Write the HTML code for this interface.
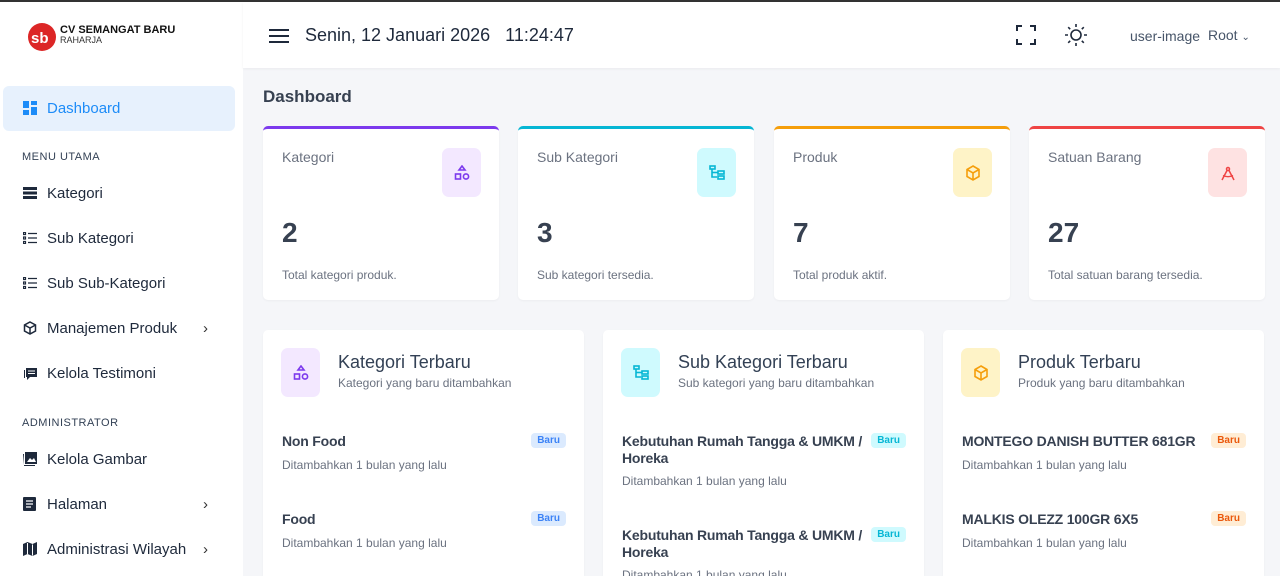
<!DOCTYPE html>
<html style="width:1280px;height:576px;overflow:hidden"><head><meta charset="utf-8"><style>
*{box-sizing:border-box;margin:0;padding:0}
body{width:1280px;height:576px;overflow:hidden;font-family:"Liberation Sans",sans-serif;background:#f5f6f9;position:relative;color:#334155}
.top{position:absolute;left:0;top:0;width:1280px;height:2px;background:#333}
.side{position:absolute;left:0;top:2px;width:243px;height:574px;background:#fff}
.hdr{position:absolute;left:243px;top:2px;width:1037px;height:66px;background:#fff;box-shadow:0 1px 3px rgba(0,0,0,.05)}
.nav{position:absolute;left:0;width:243px;height:20px;display:flex;align-items:center;font-size:15px;color:#1e293b}
.nav svg{position:absolute;left:23px}
.nav span{position:absolute;left:47px}
.nav .ch{left:203px;color:#333}
.sec{position:absolute;left:22px;font-size:11px;color:#334155;letter-spacing:.5px}
.card{position:absolute;background:#fff;border-radius:5px;box-shadow:0 1px 2px rgba(0,0,0,.04)}
.stat{top:126px;width:236px;height:174px;border-top:3px solid}
.stat .l{position:absolute;left:19px;top:20px;font-size:14px;color:#6b7280}
.stat .ic{position:absolute;left:179px;top:19px;width:39px;height:49px;border-radius:7px;display:flex;align-items:center;justify-content:center}
.stat .n{position:absolute;left:19px;top:88px;font-size:28px;font-weight:bold;color:#374151}
.stat .f{position:absolute;left:19px;top:139px;font-size:12px;color:#6b7280}
.big{top:330px;width:321px;height:246px;border-radius:5px 5px 0 0}
.big .ic{position:absolute;left:18px;top:18px;width:39px;height:49px;border-radius:7px;display:flex;align-items:center;justify-content:center}
.big .t{position:absolute;left:75px;top:22px;font-size:18px;color:#334155}
.big .s{position:absolute;left:75px;top:46px;font-size:12px;color:#6b7280}
.it{position:absolute;left:19px;font-size:14px;font-weight:bold;color:#374151;line-height:17px;white-space:nowrap;letter-spacing:-.2px}
.sub{position:absolute;left:19px;font-size:12px;color:#6b7280}
.bd{position:absolute;right:18px;font-size:10px;font-weight:bold;padding:2px 6px;border-radius:4px}
</style></head><body>
<div class="top"></div>
<div class="side">
 <svg style="position:absolute;left:27px;top:20px" width="30" height="30" viewBox="0 0 30 30"><circle cx="15" cy="15" r="14" fill="#dc2626"/><text x="4" y="21" font-size="15" font-weight="bold" fill="#fff" font-family="Liberation Sans">sb</text></svg>
 <div style="position:absolute;left:60px;top:22px;font-size:11px;font-weight:bold;color:#111">CV SEMANGAT BARU</div>
 <div style="position:absolute;left:60px;top:33px;font-size:9px;color:#333">RAHARJA</div>
 <div style="position:absolute;left:3px;top:84px;width:232px;height:45px;background:#e7f1fd;border-radius:6px"></div>
 <div class="nav" style="top:96px;color:#1d8cf8"><svg width="14" height="14" viewBox="0 0 14 14" fill="#1d8cf8"><rect x="0" y="0" width="6" height="7"/><rect x="8" y="0" width="6" height="4"/><rect x="0" y="9" width="6" height="5"/><rect x="8" y="6" width="6" height="8"/></svg><span>Dashboard</span></div>
 <div class="sec" style="top:149px">MENU UTAMA</div>
 <div class="nav" style="top:181px"><svg width="14" height="12" viewBox="0 0 14 12" fill="#1e293b"><rect y="0" width="14" height="3"/><rect y="4.5" width="14" height="3"/><rect y="9" width="14" height="3"/></svg><span>Kategori</span></div>
 <div class="nav" style="top:226px"><svg width="14" height="12" viewBox="0 0 14 12" fill="none" stroke="#1e293b" stroke-width="1.2"><rect x=".5" y=".5" width="2" height="2"/><rect x=".5" y="5" width="2" height="2"/><rect x=".5" y="9.5" width="2" height="2"/><path d="M5 1.5h9M5 6h9M5 10.5h9"/></svg><span>Sub Kategori</span></div>
 <div class="nav" style="top:271px"><svg width="14" height="12" viewBox="0 0 14 12" fill="none" stroke="#1e293b" stroke-width="1.2"><rect x=".5" y=".5" width="2" height="2"/><rect x=".5" y="5" width="2" height="2"/><rect x=".5" y="9.5" width="2" height="2"/><path d="M5 1.5h9M5 6h9M5 10.5h9"/></svg><span>Sub Sub-Kategori</span></div>
 <div class="nav" style="top:316px"><svg width="14" height="14" viewBox="0 0 14 14" fill="none" stroke="#1e293b" stroke-width="1.5"><path d="M7 1l5.5 3v6L7 13 1.5 10V4zM1.5 4L7 7l5.5-3M7 7v6"/></svg><span>Manajemen Produk</span><span class="ch">›</span></div>
 <div class="nav" style="top:361px"><svg width="15" height="15" viewBox="0 0 15 15" fill="#1e293b"><path d="M3 2h11v9H7l-3 3v-3H3z"/><rect x="5" y="4.5" width="7" height="1" fill="#fff"/><rect x="5" y="7" width="7" height="1" fill="#fff"/><path d="M1 4h1v8H1z"/></svg><span>Kelola Testimoni</span></div>
 <div class="sec" style="top:415px">ADMINISTRATOR</div>
 <div class="nav" style="top:447px"><svg width="14" height="14" viewBox="0 0 14 14" fill="#1e293b"><path d="M2 0h12v12H2z"/><path d="M0 2h1v12h11v-1H1z" /><path d="M4 10l3-4 2 2 2-2 2 4z" fill="#fff"/></svg><span>Kelola Gambar</span></div>
 <div class="nav" style="top:492px"><svg width="13" height="14" viewBox="0 0 13 14" fill="#1e293b"><rect width="13" height="14" rx="1"/><path d="M3 4h7M3 7h7M3 10h5" stroke="#fff" stroke-width="1.3"/></svg><span>Halaman</span><span class="ch">›</span></div>
 <div class="nav" style="top:537px"><svg width="14" height="14" viewBox="0 0 14 14" fill="#1e293b"><path d="M0 2l4.5-2 5 2L14 0v12l-4.5 2-5-2L0 14z"/><path d="M4.5 1v11M9.5 2.5v11" stroke="#fff" stroke-width="1"/></svg><span>Administrasi Wilayah</span><span class="ch">›</span></div>
</div>
<div class="hdr">
 <svg style="position:absolute;left:26px;top:27px" width="20" height="14" viewBox="0 0 20 14" stroke="#1e293b" stroke-width="2"><path d="M0 1h20M0 7h20M0 13h20"/></svg>
 <div style="position:absolute;left:62px;top:23px;font-size:18px;color:#1e293b">Senin, 12 Januari 2026&nbsp;&nbsp;&nbsp;11:24:47</div>
 <svg style="position:absolute;left:773px;top:23px" width="20" height="20" viewBox="0 0 20 20" fill="none" stroke="#1e293b" stroke-width="2"><path d="M1 6V1h5M14 1h5v5M19 14v5h-5M6 19H1v-5"/></svg>
 <svg style="position:absolute;left:822px;top:22px" width="22" height="22" viewBox="0 0 22 22" fill="none" stroke="#1e293b" stroke-width="1.6"><circle cx="11" cy="11" r="5"/><path d="M11 0v3M11 19v3M0 11h3M19 11h3M3.2 3.2l2 2M16.8 16.8l2 2M3.2 18.8l2-2M16.8 5.2l2-2"/></svg>
 <div style="position:absolute;left:887px;top:26px;font-size:14px;color:#475569">user-image</div>
 <div style="position:absolute;left:965px;top:25px;font-size:14px;color:#475569">Root <span style="font-size:10px">⌄</span></div>
</div>
<div style="position:absolute;left:263px;top:87px;font-size:17px;font-weight:bold;color:#374151">Dashboard</div>

<div class="card stat" style="left:263px;border-color:#7c3aed"><div class="l">Kategori</div><div class="ic" style="background:#f3e8ff"><svg width="16" height="16" viewBox="0 0 16 16" fill="none" stroke="#7c3aed" stroke-width="1.6"><path d="M8 1l3 4H5z"/><rect x="1.5" y="9" width="5" height="5"/><circle cx="12" cy="11.5" r="2.6"/></svg></div><div class="n">2</div><div class="f">Total kategori produk.</div></div>
<div class="card stat" style="left:518px;border-color:#06b6d4"><div class="l">Sub Kategori</div><div class="ic" style="background:#cffafe"><svg width="16" height="16" viewBox="0 0 16 16" fill="none" stroke="#06b6d4" stroke-width="1.6"><rect x="1" y="1" width="5" height="3"/><path d="M3 4v8h5"/><rect x="9" y="6" width="6" height="3"/><rect x="9" y="11" width="6" height="3"/><path d="M3 7.5h6"/></svg></div><div class="n">3</div><div class="f">Sub kategori tersedia.</div></div>
<div class="card stat" style="left:774px;border-color:#f59e0b"><div class="l">Produk</div><div class="ic" style="background:#fef3c7"><svg width="16" height="16" viewBox="0 0 16 16" fill="none" stroke="#f59e0b" stroke-width="1.6"><path d="M8 1l6 3.5v7L8 15 2 11.5v-7zM2 4.5L8 8l6-3.5M8 8v7"/></svg></div><div class="n">7</div><div class="f">Total produk aktif.</div></div>
<div class="card stat" style="left:1029px;border-color:#ef4444"><div class="l">Satuan Barang</div><div class="ic" style="background:#fee2e2"><svg width="16" height="16" viewBox="0 0 16 16" fill="none" stroke="#ef4444" stroke-width="1.5"><circle cx="8" cy="4" r="1.5"/><path d="M7 5.5L2 15M9 5.5L14 15M3 10.5c3 1.5 7 1.5 10 0"/></svg></div><div class="n">27</div><div class="f">Total satuan barang tersedia.</div></div>

<div class="card big" style="left:263px"><div class="ic" style="background:#f3e8ff"><svg width="16" height="16" viewBox="0 0 16 16" fill="none" stroke="#7c3aed" stroke-width="1.6"><path d="M8 1l3 4H5z"/><rect x="1.5" y="9" width="5" height="5"/><circle cx="12" cy="11.5" r="2.6"/></svg></div><div class="t">Kategori Terbaru</div><div class="s">Kategori yang baru ditambahkan</div>
<div class="it" style="top:103px">Non Food</div><div class="bd" style="top:103px;background:#dbeafe;color:#3b82f6">Baru</div><div class="sub" style="top:128px">Ditambahkan 1 bulan yang lalu</div>
<div class="it" style="top:181px">Food</div><div class="bd" style="top:181px;background:#dbeafe;color:#3b82f6">Baru</div><div class="sub" style="top:206px">Ditambahkan 1 bulan yang lalu</div></div>

<div class="card big" style="left:603px"><div class="ic" style="background:#cffafe"><svg width="16" height="16" viewBox="0 0 16 16" fill="none" stroke="#06b6d4" stroke-width="1.6"><rect x="1" y="1" width="5" height="3"/><path d="M3 4v8h5"/><rect x="9" y="6" width="6" height="3"/><rect x="9" y="11" width="6" height="3"/><path d="M3 7.5h6"/></svg></div><div class="t">Sub Kategori Terbaru</div><div class="s">Sub kategori yang baru ditambahkan</div>
<div class="it" style="top:103px">Kebutuhan Rumah Tangga &amp; UMKM /<br>Horeka</div><div class="bd" style="top:103px;background:#cffafe;color:#06b6d4">Baru</div><div class="sub" style="top:144px">Ditambahkan 1 bulan yang lalu</div>
<div class="it" style="top:197px">Kebutuhan Rumah Tangga &amp; UMKM /<br>Horeka</div><div class="bd" style="top:197px;background:#cffafe;color:#06b6d4">Baru</div><div class="sub" style="top:238px">Ditambahkan 1 bulan yang lalu</div></div>

<div class="card big" style="left:943px"><div class="ic" style="background:#fef3c7"><svg width="16" height="16" viewBox="0 0 16 16" fill="none" stroke="#f59e0b" stroke-width="1.6"><path d="M8 1l6 3.5v7L8 15 2 11.5v-7zM2 4.5L8 8l6-3.5M8 8v7"/></svg></div><div class="t">Produk Terbaru</div><div class="s">Produk yang baru ditambahkan</div>
<div class="it" style="top:103px">MONTEGO DANISH BUTTER 681GR</div><div class="bd" style="top:103px;background:#ffedd5;color:#ea580c">Baru</div><div class="sub" style="top:128px">Ditambahkan 1 bulan yang lalu</div>
<div class="it" style="top:181px">MALKIS OLEZZ 100GR 6X5</div><div class="bd" style="top:181px;background:#ffedd5;color:#ea580c">Baru</div><div class="sub" style="top:206px">Ditambahkan 1 bulan yang lalu</div></div>
</body></html>
